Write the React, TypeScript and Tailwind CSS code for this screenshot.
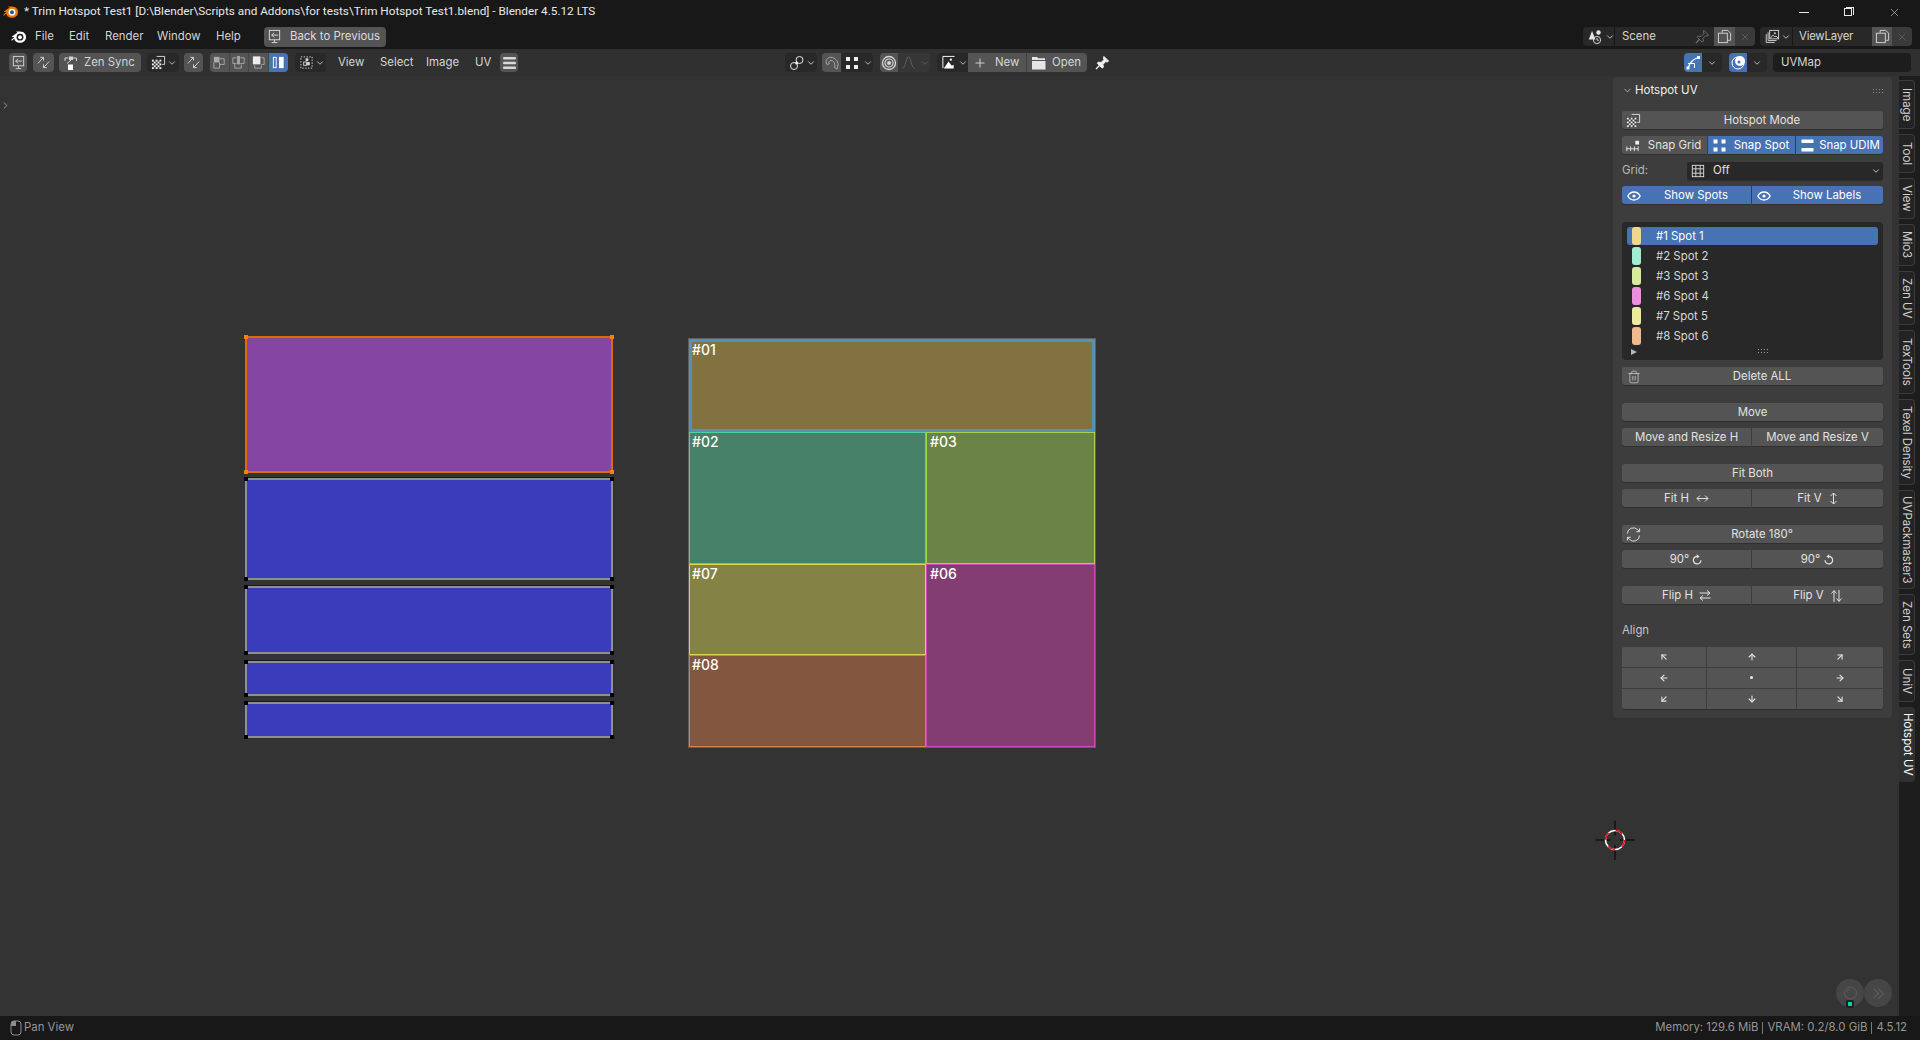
import React from "react";
import {
  ArrowDown,
  ArrowDownLeft,
  ArrowDownRight,
  ArrowLeft,
  ArrowRight,
  ArrowUp,
  ArrowUpLeft,
  ArrowUpRight,
  ChevronDown,
  ChevronRight,
  Trash2,
  X,
} from "lucide-react";

type IconProps = { size?: number; className?: string; children?: React.ReactNode };

const Svg = ({ size = 16, className = "", children }: IconProps) => (
  <svg
    width={size}
    height={size}
    viewBox="0 0 16 16"
    fill="none"
    stroke="currentColor"
    strokeWidth="1"
    className={`shrink-0 ${className}`}
  >
    {children}
  </svg>
);

const Chevron = ({ className = "" }: { className?: string }) => (
  <ChevronDown size={10} strokeWidth={2} className={`shrink-0 ${className}`} />
);

const BlenderLogo = ({
  color = "#fff",
  ring = "#1a1a1a",
  eye = "#fff",
}: {
  color?: string;
  ring?: string;
  eye?: string;
}) => (
  <svg width="16" height="14" viewBox="0 0 16 14" className="shrink-0">
    <path d="M1 6.5 L6.5 2.6 L5 1.6 L9 1.6 C13 1.6 15.5 4.5 15 8 C14.4 11.5 11 13.2 8 12.8 C5.2 12.5 3.4 10.6 3.3 8.6 L1.4 10.2 C0.6 10.8 0 10 0.6 9.4 L3.4 7 L1.6 7 C1 7 .7 6.9 1 6.5Z" fill={color} />
    <circle cx="9" cy="7.2" r="3.4" fill={ring} />
    <circle cx="9" cy="7.2" r="2" fill={eye} />
  </svg>
);

const BackIcon = () => (
  <Svg size={15}>
    <rect x="2.5" y="1.5" width="11" height="10" />
    <path d="M5 6.5h7M7.5 4L5 6.5 7.5 9M8 11.5v2.5M5 14.5h6" />
  </Svg>
);

const SwapIcon = () => (
  <Svg size={15}>
    <path d="M2 9 L8 2.5M8 2.5H4.5M8 2.5V6M14 7 L8 13.5M8 13.5h3.5M8 13.5V10" />
  </Svg>
);

const ZenSyncIcon = () => (
  <Svg size={16}>
    <rect x="6" y="1.5" width="4" height="3.5" fill="currentColor" stroke="none" />
    <path d="M5.5 3H2v3M10 3h3.5v3M4 8.5L8 5" />
    <rect x="5" y="9.5" width="5" height="5.5" fill="#fff" stroke="none" />
  </Svg>
);

const CheckerIcon = ({ size = 15 }: { size?: number }) => (
  <svg width={size} height={size} viewBox="0 0 16 16" className="shrink-0">
    <path d="M6 1.5h8.5v8.5H12" fill="none" stroke="#ddd" />
    <rect x="1" y="5" width="10" height="10" fill="#333" />
    {[1, 3, 5, 7, 9].flatMap((x, i) =>
      [5, 7, 9, 11, 13].map((y, j) =>
        (i + j) % 2 === 0 ? <rect key={`${x}-${y}`} x={x} y={y} width="2" height="2" fill="#eee" /> : null
      )
    )}
  </svg>
);

const ModeIcon = ({ active }: { active: number }) => {
  const boxes = [
    <g key="a">
      <rect x="2" y="2" width="6" height="6" fill="#aaa" stroke="none" />
      <path d="M8 4h5v6H8M2 8v6h6V8" />
    </g>,
    <g key="b">
      <rect x="6.5" y="1" width="3" height="9" fill="#aaa" stroke="none" />
      <path d="M6 3H2v6h4M10 3h4v6h-4M4 9v5h7V10" />
    </g>,
    <g key="c">
      <rect x="2" y="1.5" width="8" height="8.5" fill="#eee" stroke="none" />
      <path d="M11 3h3v7h-3M4 11v3h7v-3" />
    </g>,
    <g key="d">
      <rect x="8.5" y="2" width="5" height="12" fill="#fff" stroke="none" />
      <rect x="2.5" y="2.5" width="3" height="11" />
    </g>,
  ];
  return <Svg size={15}>{boxes[active]}</Svg>;
};

const IslandIcon = () => (
  <Svg size={15}>
    <rect x="2" y="2" width="12" height="12" strokeDasharray="1.5 1.5" />
    <rect x="7" y="3.5" width="3" height="3" fill="currentColor" stroke="none" />
    <rect x="5" y="7.5" width="3" height="3.5" />
    <rect x="8.5" y="7.5" width="3" height="3.5" fill="currentColor" stroke="none" />
  </Svg>
);

const Hamburger = () => (
  <svg width="15" height="14" viewBox="0 0 15 14" className="shrink-0">
    <rect x="1" y="1" width="13" height="2.5" rx="1" fill="#d8d8d8" />
    <rect x="1" y="5.8" width="13" height="2.5" rx="1" fill="#d8d8d8" />
    <rect x="1" y="10.5" width="13" height="2.5" rx="1" fill="#d8d8d8" />
  </svg>
);

const LinkIcon = () => (
  <Svg size={16}>
    <circle cx="5" cy="11" r="3.5" />
    <circle cx="10.5" cy="5" r="3.5" />
    <circle cx="7.7" cy="8" r="1.5" fill="#eee" stroke="none" />
  </Svg>
);

const MagnetIcon = () => (
  <Svg size={16}>
    <path d="M3 9.5 C0.5 5.5 3.5 2.3 7 2.3 C10.5 2.3 14.5 6 14 10 L13 14 L10.5 12.5 C11.5 9 10 5.5 7 5.5 C5 5.5 4.2 7.5 5.3 8.8 Z" />
  </Svg>
);

const DotsIcon = () => (
  <svg width="14" height="14" viewBox="0 0 14 14" className="shrink-0">
    <rect x="1" y="1" width="4" height="4" fill="#eee" />
    <rect x="9" y="1" width="4" height="4" fill="#eee" />
    <rect x="1" y="9" width="4" height="4" fill="#eee" />
    <rect x="9" y="9" width="4" height="4" fill="#eee" />
  </svg>
);

const PropIcon = () => (
  <Svg size={16}>
    <circle cx="8" cy="8" r="6.5" strokeWidth="1.3" />
    <circle cx="8" cy="8" r="4" strokeWidth="1.2" />
    <circle cx="8" cy="8" r="2" fill="currentColor" stroke="none" />
  </Svg>
);

const FalloffIcon = () => (
  <Svg size={15}>
    <path d="M1.5 14 C5 14 5.5 2 8 2 C10.5 2 11 14 14.5 14" />
  </Svg>
);

const ImageIcon = () => (
  <Svg size={15}>
    <path d="M2 14V1.5h12.5" stroke="#fff" />
    <path d="M3 14.5L8 7l3.5 4.5 2-1v4z" fill="#fff" stroke="none" />
    <circle cx="10.5" cy="5" r="1.2" fill="#fff" stroke="none" />
  </Svg>
);

const PlusIcon = () => (
  <Svg size={12}>
    <path d="M8 2v12M2 8h12" strokeWidth="1.3" />
  </Svg>
);

const FolderIcon = () => (
  <svg width="15" height="14" viewBox="0 0 15 14" className="shrink-0">
    <path d="M1 1h5l1 1.2h7V4H1zM1 5h13.5v8.5H1z" fill="#e6e6e6" />
  </svg>
);

const PinIcon = ({ filled = true, className = "" }: { filled?: boolean; className?: string }) => (
  <Svg size={15} className={className}>
    <path
      d="M9.5 1.5L14.5 6.5 13 7.5 11.5 7 8.5 10 9 13 7.5 14 2.5 9 3.5 7.5 6.5 8 9.5 5 9 3z"
      fill={filled ? "currentColor" : "none"}
    />
    <path d="M5 11L1 15" strokeWidth="1.4" />
  </Svg>
);

const SceneIcon = () => (
  <Svg size={16}>
    <path d="M4 2L7.5 10.5 H0.8z" fill="#e6e6e6" stroke="none" />
    <circle cx="10.5" cy="3.5" r="2.2" fill="#e6e6e6" stroke="none" />
    <circle cx="9" cy="11" r="3.6" />
    <path d="M9 9v2.2h1.8" />
  </Svg>
);

const CopyIcon = () => (
  <Svg size={15}>
    <path d="M5.5 4V1.5h6L14.5 4.5v7.5H11" />
    <rect x="1.5" y="4.5" width="9.5" height="10" />
  </Svg>
);

const LayersIcon = () => (
  <Svg size={15}>
    <rect x="5" y="1.5" width="9.5" height="9" />
    <path d="M5.5 10l3-3.5 2 2 1-1 3 2.5" />
    <circle cx="10.5" cy="4.5" r="1" fill="currentColor" stroke="none" />
    <path d="M3.3 3.5V12.3h9M1.3 5.5v8.8h9" />
  </Svg>
);

const UvEdgeIcon = () => (
  <svg width="15" height="15" viewBox="0 0 15 15" className="shrink-0" fill="none" stroke="#fff">
    <path d="M2 13C4 7 8 3.5 13 2.5" strokeWidth="1.1" />
    <path d="M2 8.5h6.5V13" strokeWidth="1" />
    <rect x="11" y="1" width="3" height="3" fill="#fff" stroke="none" />
    <rect x="0.5" y="11.5" width="3" height="3" fill="#fff" stroke="none" />
  </svg>
);

const OverlayIcon = () => (
  <svg width="15" height="15" viewBox="0 0 15 15" className="shrink-0">
    <circle cx="7" cy="8" r="6" fill="none" stroke="#fff" />
    <circle cx="9" cy="6" r="5" fill="#fff" />
    <circle cx="8" cy="7" r="1.5" fill="#4772b3" />
  </svg>
);

const GridIcon = () => (
  <Svg size={14}>
    <rect x="1.5" y="1.5" width="13" height="13" />
    <path d="M5.5 1.5v13M10.5 1.5v13M1.5 5.5h13M1.5 10.5h13" />
  </Svg>
);

const EyeIcon = () => (
  <svg width="14" height="10" viewBox="0 0 14 10" className="shrink-0" fill="none" stroke="#fff" strokeWidth="1.3">
    <path d="M.8 5C2.5 2 4.7 1 7 1s4.5 1 6.2 4C11.5 8 9.3 9 7 9S2.5 8 .8 5z" />
    <circle cx="7" cy="5" r="1.6" fill="#fff" stroke="none" />
  </svg>
);

const SnapGridIcon = () => (
  <Svg size={15}>
    <rect x="11" y="3" width="4" height="4" fill="#eee" stroke="none" />
    <path d="M1 11.5h13M2 9v5M6 9v5M10 9v5M14 9v5" />
  </Svg>
);

const SnapSpotIcon = () => (
  <svg width="13" height="13" viewBox="0 0 13 13" className="shrink-0">
    <rect x="0.5" y="0.5" width="4" height="4" fill="#fff" />
    <rect x="8.5" y="0.5" width="4" height="4" fill="#fff" />
    <rect x="0.5" y="8.5" width="4" height="4" fill="#fff" />
    <rect x="8.5" y="8.5" width="4" height="4" fill="#fff" />
  </svg>
);

const SnapUdimIcon = () => (
  <svg width="13" height="13" viewBox="0 0 13 13" className="shrink-0">
    <rect x="0.5" y="0.5" width="12" height="3.5" fill="#fff" />
    <rect x="0.5" y="9" width="12" height="3.5" fill="#fff" />
  </svg>
);

const RefreshIcon = () => (
  <Svg size={15}>
    <path d="M1.5 7A6.3 6.3 0 0 1 12.5 3L14.5 5M14.5 1.5V5H11M14.5 9A6.3 6.3 0 0 1 3.5 13L1.5 11M1.5 14.5V11H5" />
  </Svg>
);

const RotIcon = ({ flip = false }: { flip?: boolean }) => (
  <Svg size={11} className={flip ? "-scale-x-100" : ""}>
    <path d="M13 9A5.5 5.5 0 1 1 8 3.5" strokeWidth="1.8" />
    <path d="M7 .5L11 3.5 7 6.5z" fill="currentColor" stroke="none" />
  </Svg>
);

const TAB_LABELS = [
  { label: "Image", height: 49 },
  { label: "Tool", height: 39 },
  { label: "View", height: 41 },
  { label: "Mio3", height: 42 },
  { label: "Zen UV", height: 54 },
  { label: "TexTools", height: 64 },
  { label: "Texel Density", height: 86 },
  { label: "UVPackmaster3", height: 99 },
  { label: "Zen Sets", height: 61 },
  { label: "UniV", height: 42 },
];

const SPOTS = [
  { label: "#1 Spot 1", color: "#ecd98e" },
  { label: "#2 Spot 2", color: "#a3ebd1" },
  { label: "#3 Spot 3", color: "#d7eb9f" },
  { label: "#6 Spot 4", color: "#ec8fdc" },
  { label: "#7 Spot 5", color: "#eeeb9d" },
  { label: "#8 Spot 6", color: "#edbb8f" },
];

const ISLANDS = ["mt-[5px] h-[102px]", "mt-[6px] h-[68px]", "mt-[7px] h-[35px]", "mt-[6px] h-[36px]"];

const Btn = ({
  children,
  className = "",
  active = false,
}: {
  children?: React.ReactNode;
  className?: string;
  active?: boolean;
}) => (
  <div
    className={`flex h-[18px] items-center justify-center whitespace-nowrap pt-px shadow-[0_1px_0_#2f2f2f] ${
      active ? "bg-[#4772b3] text-white" : "bg-[#545454] text-[#e2e2e2]"
    } ${className}`}
  >
    {children}
  </div>
);

const Corners = ({ color }: { color: string }) => (
  <>
    <span className="absolute -left-[3px] -top-[3px] size-[4px]" style={{ background: color }} />
    <span className="absolute -right-[3px] -top-[3px] size-[4px]" style={{ background: color }} />
    <span className="absolute -bottom-[3px] -left-[3px] size-[4px]" style={{ background: color }} />
    <span className="absolute -bottom-[3px] -right-[3px] size-[4px]" style={{ background: color }} />
  </>
);

const SpotCell = ({ label, className }: { label: string; className: string }) => (
  <div className={`text-[14px] font-medium leading-[16px] text-white ${className}`}>{label}</div>
);

const HotspotPanel = () => (
  <div className="absolute right-[7px] top-[1px] w-[279px] rounded-[4px] bg-[#3d3d3d] px-[9px] pb-[9px] text-[11.4px] text-[#e2e2e2]">
    <div className="flex h-[26px] items-center pt-px">
      <ChevronDown size={11} strokeWidth={1.5} className="mr-[2px]" />
      <span className="text-[11.5px] text-[#f0f0f0]">Hotspot UV</span>
      <div className="ml-auto grid grid-cols-4 gap-x-[2px] gap-y-[2px]">
        {Array.from({ length: 8 }).map((_, i) => (
          <span key={i} className="size-[1px] bg-[#8a8a8a]" />
        ))}
      </div>
    </div>

    <div className="mt-[8px] flex flex-col gap-[18px]">
      <div className="flex flex-col gap-[7px]">
        <Btn className="rounded-[3px] pl-[4px]">
          <CheckerIcon />
          <span className="flex-1 text-center">Hotspot Mode</span>
        </Btn>
        <div className="flex gap-px">
          <Btn className="w-[85px] gap-[2px] rounded-l-[3px] pl-[3px]">
            <SnapGridIcon />
            <span className="flex-1 text-center">Snap Grid</span>
          </Btn>
          <Btn active className="w-[87px] gap-[2px] pl-[5px]">
            <SnapSpotIcon />
            <span className="flex-1 text-center">Snap Spot</span>
          </Btn>
          <Btn active className="w-[87px] gap-[2px] rounded-r-[3px] pl-[5px]">
            <SnapUdimIcon />
            <span className="flex-1 text-center">Snap UDIM</span>
          </Btn>
        </div>
        <div className="flex h-[18px] items-center pt-px">
          <span className="w-[65px] text-[#b8b8b8]">Grid:</span>
          <div className="flex h-[18px] flex-1 items-center rounded-[3px] bg-[#282828] pl-[4px] pr-[2px] shadow-[0_1px_0_#2f2f2f]">
            <GridIcon />
            <span className="ml-[8px]">Off</span>
            <Chevron className="ml-auto" />
          </div>
        </div>
        <div className="flex gap-px">
          <Btn active className="w-[129px] rounded-l-[3px] pl-[5px]">
            <EyeIcon />
            <span className="flex-1 text-center">Show Spots</span>
          </Btn>
          <Btn active className="w-[131px] rounded-r-[3px] pl-[5px]">
            <EyeIcon />
            <span className="flex-1 text-center">Show Labels</span>
          </Btn>
        </div>
      </div>

      <div className="flex flex-col gap-[7px]">
        <div className="h-[138px] rounded-[4px] bg-[#282828] px-[5px] pt-[5px]">
          <div className="flex flex-col gap-[2px]">
            {SPOTS.map((spot, i) => (
              <div
                key={spot.label}
                className={`flex h-[18px] items-center rounded-[3px] pl-[5px] ${i === 0 ? "bg-[#4772b3] text-white" : "text-[#d8d8d8]"}`}
              >
                <span className="h-[18px] w-[9px] rounded-[3px]" style={{ background: spot.color }} />
                <span className="ml-[15px] pt-px">{spot.label}</span>
              </div>
            ))}
          </div>
          <div className="relative flex h-[9px] items-center justify-center pl-[20px] pt-[3px]">
            <span className="absolute left-[4px] top-[4px] h-0 w-0 border-y-[3px] border-l-[6px] border-y-transparent border-l-[#b8b8b8]" />
            <div className="grid grid-cols-4 gap-x-[2px] gap-y-[2px]">
              {Array.from({ length: 8 }).map((_, i) => (
                <span key={i} className="size-[1px] bg-[#9a9a9a]" />
              ))}
            </div>
          </div>
        </div>
        <Btn className="rounded-[3px] pl-[5px]">
          <Trash2 size={14} strokeWidth={1.1} />
          <span className="flex-1 text-center">Delete ALL</span>
        </Btn>
      </div>

      <div className="flex flex-col gap-[7px]">
        <Btn className="rounded-[3px]">Move</Btn>
        <div className="flex gap-px">
          <Btn className="w-[129px] rounded-l-[3px]">Move and Resize H</Btn>
          <Btn className="flex-1 rounded-r-[3px]">Move and Resize V</Btn>
        </div>
      </div>

      <div className="flex flex-col gap-[7px]">
        <Btn className="rounded-[3px]">Fit Both</Btn>
        <div className="flex gap-px">
          <Btn className="w-[129px] gap-[7px] rounded-l-[3px]">
            Fit H
            <svg width="13" height="9" viewBox="0 0 13 9" fill="none" stroke="currentColor">
              <path d="M1 4.5h11M4 1.5l-3 3 3 3M9 1.5l3 3-3 3" />
            </svg>
          </Btn>
          <Btn className="flex-1 gap-[7px] rounded-r-[3px]">
            Fit V
            <svg width="9" height="13" viewBox="0 0 9 13" fill="none" stroke="currentColor">
              <path d="M4.5 1v11M1.5 4l3-3 3 3M1.5 9l3 3 3-3" />
            </svg>
          </Btn>
        </div>
      </div>

      <div className="flex flex-col gap-[7px]">
        <Btn className="rounded-[3px] pl-[4px]">
          <RefreshIcon />
          <span className="flex-1 text-center">Rotate 180°</span>
        </Btn>
        <div className="flex gap-px">
          <Btn className="w-[129px] gap-[3px] rounded-l-[3px]">
            90° <RotIcon />
          </Btn>
          <Btn className="flex-1 gap-[3px] rounded-r-[3px]">
            90° <RotIcon flip />
          </Btn>
        </div>
      </div>

      <div className="flex gap-px">
        <Btn className="w-[129px] gap-[6px] rounded-l-[3px]">
          Flip H
          <svg width="12" height="11" viewBox="0 0 12 11" fill="none" stroke="currentColor">
            <path d="M.5 3h10M8 .5L11 3 8 5.5M11.5 8h-10M4 5.5L1 8l3 2.5" />
          </svg>
        </Btn>
        <Btn className="flex-1 gap-[7px] rounded-r-[3px]">
          Flip V
          <svg width="11" height="12" viewBox="0 0 11 12" fill="none" stroke="currentColor">
            <path d="M3 12V1M.5 3.5L3 .5l2.5 3M8 0v11M5.5 8.5L8 11.5l2.5-3" />
          </svg>
        </Btn>
      </div>

      <div className="flex flex-col gap-[7px]">
        <div className="flex h-[18px] items-center text-[#c4c4c4]">Align</div>
        <div className="grid grid-cols-[84px_89px_86px] gap-px overflow-hidden rounded-[3px] shadow-[0_1px_0_#2f2f2f]">
          {[
            ArrowUpLeft,
            ArrowUp,
            ArrowUpRight,
            ArrowLeft,
            null,
            ArrowRight,
            ArrowDownLeft,
            ArrowDown,
            ArrowDownRight,
          ].map((Icon, i) => (
            <div key={i} className="flex h-[20px] items-center justify-center bg-[#545454] pb-px text-[#e6e6e6]">
              {Icon ? <Icon size={10} strokeWidth={2.6} /> : <span className="size-[3px] rounded-full bg-[#e6e6e6]" />}
            </div>
          ))}
        </div>
      </div>
    </div>
  </div>
);

const App = () => {
  return (
    <div className="flex h-screen w-full flex-col overflow-hidden bg-[#181818] font-['Inter',sans-serif] text-[11.4px] text-[#d4d4d4]">
      {/* window title */}
      <div className="flex h-[24px] shrink-0 items-center pl-[3px] font-['Roboto',sans-serif] text-[11.75px] text-[#e8e8e8]">
        <BlenderLogo color="#ea7600" ring="#ffffff" eye="#265787" />
        <span className="ml-[5px] whitespace-nowrap">
          * Trim Hotspot Test1 [D:\Blender\Scripts and Addons\for tests\Trim Hotspot Test1.blend] - Blender 4.5.12 LTS
        </span>
        <div className="ml-auto flex items-center pr-[19px]">
          <span className="h-px w-[10px] bg-[#e8e8e8]" />
          <span className="relative ml-[35px] size-[10px]">
            <span className="absolute left-0 top-[1px] size-[8px] border border-[#e8e8e8]" />
            <span className="absolute right-0 top-0 size-[8px] border-r border-t border-[#e8e8e8]" />
          </span>
          <X size={13} strokeWidth={1} className="ml-[34px]" />
        </div>
      </div>

      {/* menu bar */}
      <div className="flex h-[25px] shrink-0 items-center pl-[11px]">
        <BlenderLogo />
        <span className="ml-[8px] w-[34px]">File</span>
        <span className="w-[36px]">Edit</span>
        <span className="w-[52px]">Render</span>
        <span className="w-[59px]">Window</span>
        <span className="w-[48px]">Help</span>
        <div className="flex h-[20px] w-[122px] items-center gap-[8px] rounded-[4px] bg-[#545454] pl-[3px] text-[#dcdcdc]">
          <BackIcon />
          <span className="whitespace-nowrap">Back to Previous</span>
        </div>
        <div className="ml-auto flex items-center pr-[8px]">
          <div className="flex h-[19px] w-[31px] items-center gap-[1px] rounded-l-[4px] bg-[#282828] pl-[5px]">
            <SceneIcon />
            <Chevron />
          </div>
          <div className="flex h-[19px] w-[100px] items-center border-l border-[#181818] bg-[#282828] pl-[7px]">
            Scene
            <PinIcon filled={false} className="ml-auto mr-[4px] text-[#707070]" />
          </div>
          <div className="flex h-[19px] w-[21px] items-center justify-center bg-[#545454]">
            <CopyIcon />
          </div>
          <div className="flex h-[19px] w-[20px] items-center justify-center rounded-r-[4px] bg-[#3a3a3a] text-[#707070]">
            <X size={12} strokeWidth={1.2} />
          </div>
          <div className="ml-[5px] flex h-[19px] w-[32px] items-center gap-[1px] rounded-l-[4px] bg-[#282828] pl-[5px]">
            <LayersIcon />
            <Chevron />
          </div>
          <div className="flex h-[19px] w-[80px] items-center border-l border-[#181818] bg-[#282828] pl-[6px] tracking-[-0.02em]">
            ViewLayer
          </div>
          <div className="flex h-[19px] w-[20px] items-center justify-center bg-[#545454]">
            <CopyIcon />
          </div>
          <div className="flex h-[19px] w-[20px] items-center justify-center rounded-r-[4px] bg-[#3a3a3a] text-[#707070]">
            <X size={12} strokeWidth={1.2} />
          </div>
        </div>
      </div>

      {/* uv editor header */}
      <div className="flex h-[27px] shrink-0 items-center bg-[#303030] pl-[9px]">
        <div className="flex h-[19px] w-[18px] items-center justify-center rounded-[4px] bg-[#545454]">
          <BackIcon />
        </div>
        <div className="ml-[6px] flex h-[19px] w-[21px] items-center justify-center rounded-[4px] bg-[#545454]">
          <SwapIcon />
        </div>
        <div className="ml-[5px] flex h-[19px] w-[82px] items-center gap-[5px] rounded-[4px] bg-[#545454] pl-[4px]">
          <ZenSyncIcon />
          <span className="whitespace-nowrap">Zen Sync</span>
        </div>
        <div className="ml-[6px] flex h-[19px] w-[32px] items-center gap-[1px] rounded-[4px] bg-[#282828] pl-[4px]">
          <CheckerIcon size={15} />
          <Chevron />
        </div>
        <div className="ml-[5px] flex h-[19px] w-[19px] items-center justify-center rounded-[4px] bg-[#545454]">
          <SwapIcon />
        </div>
        <div className="ml-[7px] flex h-[19px] w-[78px] overflow-hidden rounded-[4px] text-[#aaaaaa]">
          {[0, 1, 2, 3].map((mode) => (
            <div
              key={mode}
              className={`flex h-full w-[19.5px] items-center justify-center ${mode === 3 ? "bg-[#4772b3] text-white" : "border-r border-[#464646] bg-[#545454]"}`}
            >
              <ModeIcon active={mode} />
            </div>
          ))}
        </div>
        <div className="ml-[7px] flex h-[19px] w-[31px] items-center gap-[1px] rounded-[4px] bg-[#282828] pl-[4px]">
          <IslandIcon />
          <Chevron />
        </div>
        <span className="ml-[12px] w-[42px]">View</span>
        <span className="w-[46px]">Select</span>
        <span className="w-[49px]">Image</span>
        <span className="w-[25px]">UV</span>
        <div className="flex h-[19px] w-[18px] items-center justify-center rounded-[4px] bg-[#545454]">
          <Hamburger />
        </div>

        <div className="ml-[267px] flex h-[19px] w-[32px] items-center gap-[1px] rounded-[4px] bg-[#282828] pl-[4px] text-[#e6e6e6]">
          <LinkIcon />
          <Chevron />
        </div>
        <div className="ml-[5px] flex h-[19px] w-[51px] overflow-hidden rounded-[4px]">
          <div className="flex w-[19px] items-center justify-center bg-[#545454] text-[#a8a8a8]">
            <MagnetIcon />
          </div>
          <div className="flex flex-1 items-center gap-[4px] bg-[#282828] pl-[4px]">
            <DotsIcon />
            <Chevron />
          </div>
        </div>
        <div className="ml-[7px] flex h-[19px] w-[50px] overflow-hidden rounded-[4px]">
          <div className="flex w-[18px] items-center justify-center bg-[#545454] text-[#d8d8d8]">
            <PropIcon />
          </div>
          <div className="flex flex-1 items-center gap-[4px] bg-[#363636] pl-[3px] text-[#666666]">
            <FalloffIcon />
            <Chevron />
          </div>
        </div>
        <div className="ml-[7px] flex h-[19px] w-[150px] overflow-hidden rounded-[4px]">
          <div className="flex w-[31px] items-center gap-[2px] bg-[#282828] pl-[4px]">
            <ImageIcon />
            <Chevron />
          </div>
          <div className="flex w-[59px] items-center border-r border-[#3e3e3e] bg-[#545454] pl-[6px]">
            <PlusIcon />
            <span className="ml-[9px]">New</span>
          </div>
          <div className="flex flex-1 items-center bg-[#545454] pl-[4px]">
            <FolderIcon />
            <span className="ml-[6px]">Open</span>
          </div>
        </div>
        <div className="ml-[8px] text-[#f0f0f0]">
          <PinIcon />
        </div>

        <div className="ml-auto flex items-center pr-[9px]">
          <div className="flex h-[19px] w-[38px] overflow-hidden rounded-[4px] bg-[#282828]">
            <div className="flex w-[18px] items-center justify-center bg-[#4772b3]">
              <UvEdgeIcon />
            </div>
            <div className="flex flex-1 items-center justify-center">
              <Chevron />
            </div>
          </div>
          <div className="ml-[7px] flex h-[19px] w-[38px] overflow-hidden rounded-[4px] bg-[#282828]">
            <div className="flex w-[18px] items-center justify-center bg-[#4772b3]">
              <OverlayIcon />
            </div>
            <div className="flex flex-1 items-center justify-center">
              <Chevron />
            </div>
          </div>
          <div className="ml-[6px] flex h-[19px] w-[138px] items-center rounded-[4px] bg-[#1d1d1d] pl-[8px]">UVMap</div>
        </div>
      </div>

      {/* viewport */}
      <div className="flex min-h-0 flex-1">
        <div className="relative flex-1 bg-[#333333]">
          <ChevronRight size={11} strokeWidth={1.5} className="absolute left-0 top-[24px] text-[#c0c0c0]" />

          {/* uv islands */}
          <div className="absolute left-[245px] top-[260px] flex w-[368px] flex-col">
            <div className="relative h-[137px] border-2 border-[#e06a00] bg-[#8445a3]">
              <Corners color="#ff8000" />
            </div>
            {ISLANDS.map((height) => (
              <div
                key={height}
                className={`relative border-2 border-[#8f8f8f] bg-[#3a3cbc] shadow-[0_-1px_0_#1a1a1a] ${height}`}
              >
                <Corners color="#000000" />
              </div>
            ))}
          </div>

          {/* trim atlas */}
          <div className="absolute left-[689px] top-[263px] grid h-[408px] w-[406px] grid-cols-[237px_169px] grid-rows-[93px_132px_91px_92px] outline outline-1 outline-[#5f5f5f]">
            <SpotCell label="#01" className="col-span-2 border-[3px] border-[#5691b5] bg-[#82723f]" />
            <SpotCell label="#02" className="border border-[#4ed3a0] bg-[#478168] pl-[2px] pt-px" />
            <SpotCell label="#03" className="border border-[#a3d44f] bg-[#6a8346] pl-[3px] pt-px" />
            <SpotCell label="#07" className="border border-[#d6d450] bg-[#848345] pl-[2px] pt-px" />
            <SpotCell label="#06" className="row-span-2 border border-[#d448b4] bg-[#833d72] pl-[3px] pt-px" />
            <SpotCell label="#08" className="border border-[#d67f4a] bg-[#83563f] pl-[2px] pt-px" />
          </div>

          {/* 2d cursor */}
          <svg width="40" height="40" viewBox="0 0 40 40" className="absolute left-[1595px] top-[744px]">
            <path d="M0.5 20h15M25 20h15M20 0.5v15M20 25v15" stroke="#000" strokeWidth="1" />
            <circle cx="20" cy="20" r="9.5" fill="none" stroke="#fff" strokeWidth="1.6" />
            <circle cx="20" cy="20" r="9.5" fill="none" stroke="#e01010" strokeWidth="1.6" strokeDasharray="7.5 7.5" />
          </svg>

          {/* nav gizmo */}
          <div className="absolute bottom-[9px] right-[7px] flex items-center">
            <div className="relative flex size-[28px] items-center justify-center rounded-full bg-[#464646] text-[#5c5c5c]">
              <svg width="15" height="15" viewBox="0 0 15 15" fill="none" stroke="currentColor" strokeWidth="1">
                <circle cx="7.5" cy="7" r="6" />
                <path d="M4 6a3.5 3.5 0 0 1 3-3" />
              </svg>
              <span className="absolute -bottom-[1px] left-[10px] flex size-[8px] items-center justify-center rounded-[2px] bg-[#1f1f1f]">
                <span className="size-[4px] bg-[#00d4a0]" />
              </span>
            </div>
            <div className="flex size-[28px] items-center justify-center rounded-full bg-[#464646] text-[#5c5c5c]">
              <svg width="13" height="11" viewBox="0 0 13 11" fill="none" stroke="currentColor" strokeWidth="1.2">
                <path d="M1.5 .5l5 5-5 5M6.5 .5l5 5-5 5" />
              </svg>
            </div>
          </div>

          <HotspotPanel />
        </div>

        {/* side tabs */}
        <div className="flex w-[21px] shrink-0 flex-col gap-[5px] bg-[#1d1d1d] pt-[4px]">
          {TAB_LABELS.map((tab) => (
            <div
              key={tab.label}
              className="flex w-[16px] shrink-0 items-center justify-center rounded-r-[4px] border border-l-0 border-[#3c3c3c] bg-[#232323] text-[11.5px] text-[#d0d0d0]"
              style={{ height: tab.height }}
            >
              <span className="whitespace-nowrap [writing-mode:vertical-rl]">{tab.label}</span>
            </div>
          ))}
          <div className="flex h-[75px] w-[16px] shrink-0 items-center justify-center rounded-r-[4px] bg-[#303030] text-[11.5px] text-white">
            <span className="whitespace-nowrap [writing-mode:vertical-rl]">Hotspot UV</span>
          </div>
        </div>
      </div>

      {/* status bar */}
      <div className="flex h-[24px] shrink-0 items-center pl-[10px] text-[#969696]">
        <svg width="12" height="16" viewBox="0 0 12 16" className="shrink-0">
          <rect x="1" y="1" width="10" height="14" rx="3" fill="none" stroke="#8c8c8c" />
          <path d="M1 6V4a3 3 0 0 1 3-3h2v5z" fill="#8c8c8c" />
        </svg>
        <span className="ml-[2px]">Pan View</span>
        <div className="ml-auto flex items-center pr-[13px]">
          Memory: 129.6 MiB
          <span className="mx-[4px] h-[12px] w-px bg-[#7a7a7a]" />
          VRAM: 0.2/8.0 GiB
          <span className="mx-[4px] h-[12px] w-px bg-[#7a7a7a]" />
          4.5.12
        </div>
      </div>
    </div>
  );
};

export default App;
